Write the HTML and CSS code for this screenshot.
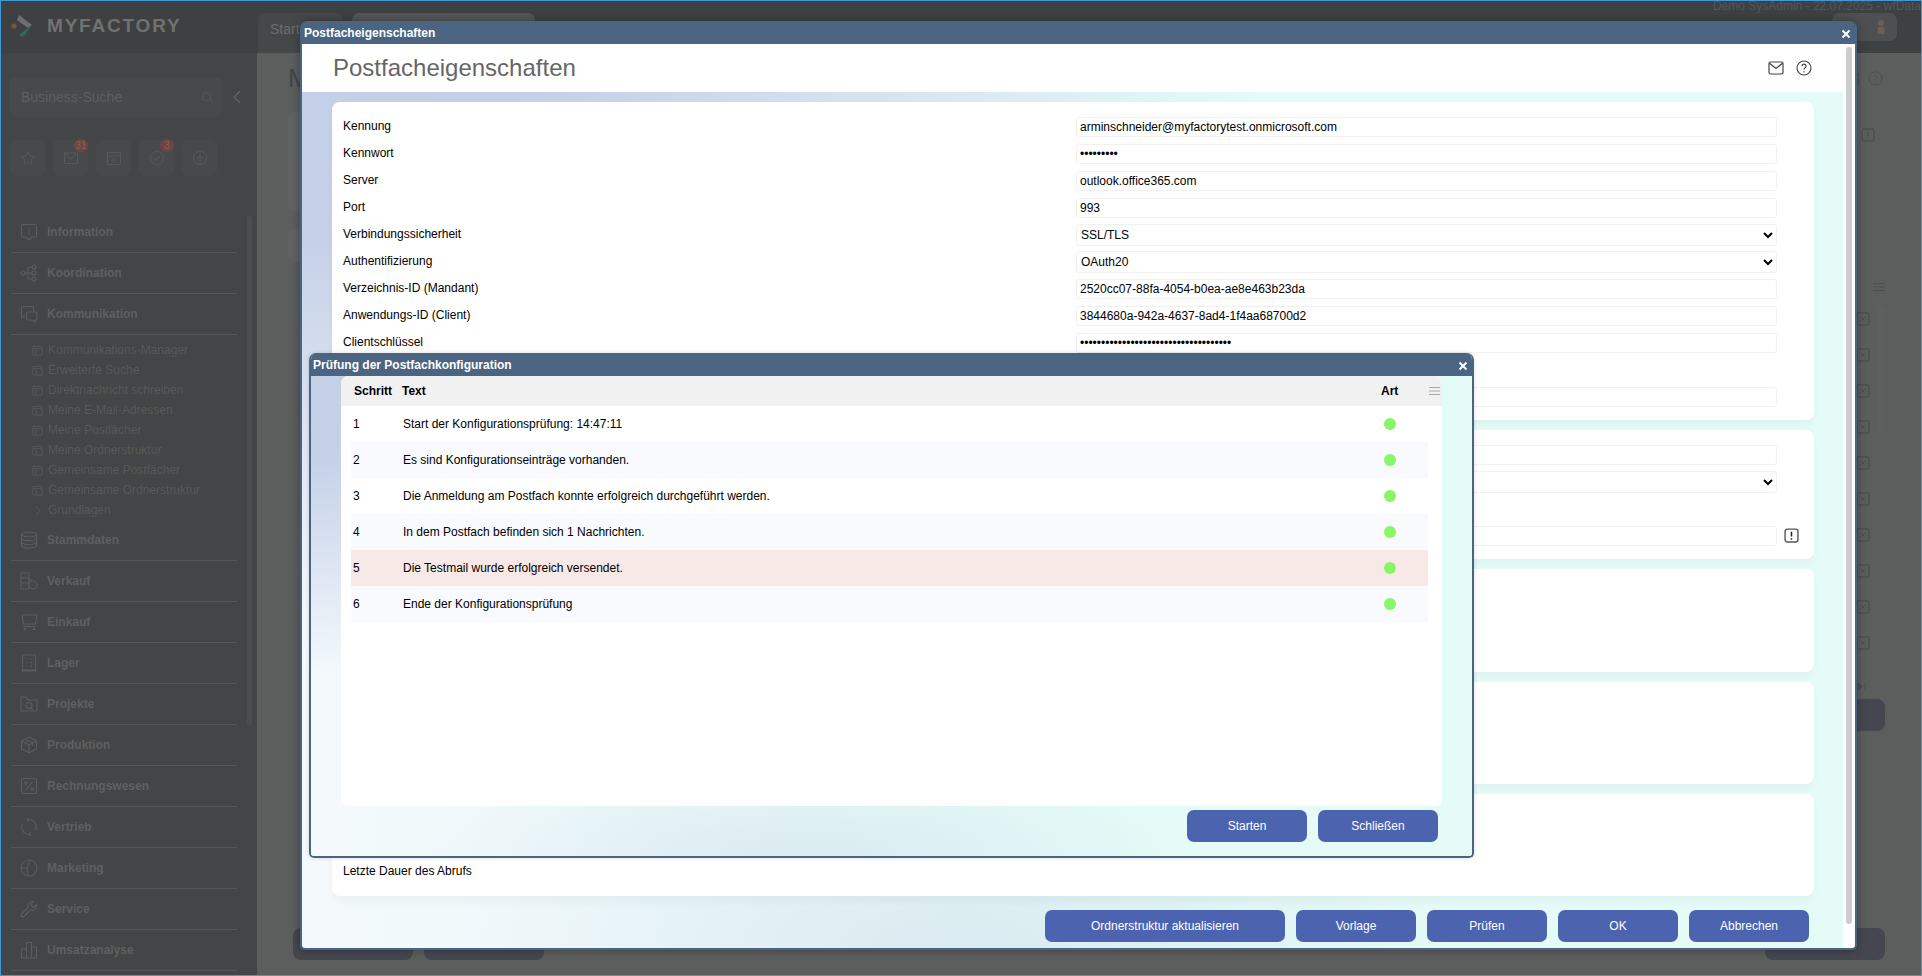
FILE: index.html
```html
<!DOCTYPE html>
<html lang="de">
<head>
<meta charset="utf-8">
<title>Postfacheigenschaften</title>
<link rel="stylesheet" href="styles.css">
</head>
<body>
<svg class="sprite" width="0" height="0" aria-hidden="true">
  <symbol id="i-sub" viewBox="0 0 12 12"><path d="M1 1.500h10v9.500H1zM1 4h10M4.500 4v7" fill="none" stroke="currentColor"/></symbol>
  <symbol id="i-xbox" viewBox="0 0 14 14"><rect x="1" y="1" width="12" height="12" rx="2" fill="none" stroke="currentColor" stroke-width="1.300"/><path d="M4.800 4.800l4.400 4.400M9.200 4.800l-4.400 4.400" stroke="currentColor"/></symbol>
</svg>
<div class="window">
  <header class="topbar">
    <div class="logo">
      <svg class="logo-mark" viewBox="0 0 24 24"><circle cx="3" cy="12" r="2.600" fill="#6b5b3a"/><path d="M8 1l13 10-4 3L6 6z" fill="#6d6e6f"/><path d="M17 14l4-3-9 12-4-2z" fill="#2f6a60"/></svg>
      <span class="logo-text">MYFACTORY</span>
    </div>
    <div class="tab">Start</div>
    <div class="tab tab-active"></div>
    <div class="top-right">
      <div class="user-line">Demo SysAdmin - 22.07.2025 - wfData</div>
      <div class="user-box"><svg viewBox="0 0 12 16" class="user-icon"><circle cx="6" cy="4" r="3" fill="#6b5f55"/><path d="M2.500 15V9.500Q2.500 8 4 8h4q1.500 0 1.500 1.500V15z" fill="#6b5f55"/></svg></div>
    </div>
  </header>
  <div class="below">
    <aside class="sidebar">
      <div class="search-row">
        <div class="search">
          <span>Business-Suche</span>
          <svg class="search-icon" viewBox="0 0 14 14"><circle cx="6" cy="6" r="4.500" fill="none" stroke="currentColor"/><path d="M9.500 9.500L13 13" stroke="currentColor"/></svg>
        </div>
        <svg class="collapse" viewBox="0 0 8 14"><path d="M7 1L1 7l6 6" fill="none" stroke="currentColor" stroke-width="1.300"/></svg>
      </div>
      <div class="quick">
        <div class="quick-btn"><svg viewBox="0 0 16 16"><path d="M8 1.500l2 4.300 4.600.6-3.400 3.200.9 4.600L8 11.900l-4.100 2.300.9-4.600L1.400 6.400 6 5.800z" fill="none" stroke="currentColor"/></svg></div>
        <div class="quick-btn"><svg viewBox="0 0 16 16"><path d="M1.500 3h13v10.500h-13zM1.500 3L8 9l6.500-6" fill="none" stroke="currentColor"/></svg><span class="badge">31</span></div>
        <div class="quick-btn"><svg viewBox="0 0 16 16"><path d="M1.500 2.500h13v12h-13zM1.500 6h13M8 8v4" fill="none" stroke="currentColor"/></svg></div>
        <div class="quick-btn"><svg viewBox="0 0 16 16"><circle cx="8" cy="8" r="6.500" fill="none" stroke="currentColor"/><path d="M5 8l2.200 2.200L11 6" fill="none" stroke="currentColor"/></svg><span class="badge">3</span></div>
        <div class="quick-btn"><svg viewBox="0 0 16 16"><circle cx="8" cy="8" r="6.500" fill="none" stroke="currentColor"/><path d="M8 5v6M5 8h6" stroke="currentColor"/></svg></div>
      </div>
      <nav class="nav">
        <div class="nav-item"><svg viewBox="0 0 18 18"><path d="M3 1.500h12q1.500 0 1.500 1.500v9.500q0 1.500-1.500 1.500h-3L9 17l-3-3H3q-1.500 0-1.500-1.500V3Q1.500 1.500 3 1.500zM9 5v.8M9 7.500v4" fill="none" stroke="currentColor" stroke-width="1.100"/></svg>Information</div>
        <div class="nav-item"><svg viewBox="0 0 18 18"><g fill="none" stroke="currentColor" stroke-width="1.100"><circle cx="3" cy="9" r="2"/><circle cx="14" cy="3" r="2"/><circle cx="14" cy="9" r="2"/><circle cx="14" cy="15" r="2"/><path d="M5 9h7M8 9V3h4M8 9v6h4"/></g></svg>Koordination</div>
        <div class="nav-item"><svg viewBox="0 0 18 18"><g fill="none" stroke="currentColor" stroke-width="1.100"><path d="M3 1.500h9q1.500 0 1.500 1.500v3M5 11H3.500L1.500 13V3q0-1.500 1.500-1.500"/><path d="M8 7h7.500q1.500 0 1.500 1.500v5q0 1.500-1.500 1.500H15v2l-2.500-2H8q-1.500 0-1.500-1.500v-5Q6.500 7 8 7z"/></g></svg>Kommunikation</div>
        <ul class="sub">
          <li><svg><use href="#i-sub"/></svg>Kommunikations-Manager</li>
          <li><svg><use href="#i-sub"/></svg>Erweiterte Suche</li>
          <li><svg><use href="#i-sub"/></svg>Direktnachricht schreiben</li>
          <li><svg><use href="#i-sub"/></svg>Meine E-Mail-Adressen</li>
          <li><svg><use href="#i-sub"/></svg>Meine Postfächer</li>
          <li><svg><use href="#i-sub"/></svg>Meine Ordnerstruktur</li>
          <li><svg><use href="#i-sub"/></svg>Gemeinsame Postfächer</li>
          <li><svg><use href="#i-sub"/></svg>Gemeinsame Ordnerstruktur</li>
          <li><svg viewBox="0 0 12 12"><path d="M4 1l5 5-5 5" fill="none" stroke="currentColor"/></svg>Grundlagen</li>
        </ul>
        <div class="nav-item"><svg viewBox="0 0 18 18"><g fill="none" stroke="currentColor" stroke-width="1.200"><ellipse cx="9" cy="3.500" rx="7.500" ry="2.500"/><path d="M1.500 3.500v11c0 1.400 3.400 2.500 7.500 2.500s7.500-1.100 7.500-2.500v-11M1.500 7.200c0 1.400 3.400 2.500 7.500 2.500s7.500-1.100 7.500-2.500M1.500 11c0 1.400 3.400 2.500 7.500 2.500s7.500-1.100 7.500-2.500"/></g></svg>Stammdaten</div>
        <div class="nav-item"><svg viewBox="0 0 18 18"><g fill="none" stroke="currentColor" stroke-width="1.100"><path d="M1 1h8v16H1zM1 6h8M1 11h8M9 8h3"/><circle cx="13" cy="13" r="4"/></g></svg>Verkauf</div>
        <div class="nav-item"><svg viewBox="0 0 18 18"><g fill="none" stroke="currentColor" stroke-width="1.100"><path d="M1 2h16l-1.500 9H3.500L2 2M3.500 13.500h12"/><circle cx="5" cy="16" r=".8"/><circle cx="14" cy="16" r=".8"/></g></svg>Einkauf</div>
        <div class="nav-item"><svg viewBox="0 0 18 18"><g fill="none" stroke="currentColor" stroke-width="1.100"><path d="M2.500 1h13v15h-13zM1 17h16M6 5h1M10 5h2M6 8.500h1M10 8.500h2M6 12h1M10 12h2"/></g></svg>Lager</div>
        <div class="nav-item"><svg viewBox="0 0 18 18"><g fill="none" stroke="currentColor" stroke-width="1.100"><path d="M1 16V2h5l2 3h9v11z"/><circle cx="9" cy="10.500" r="3"/><path d="M11 13l2 2"/></g></svg>Projekte</div>
        <div class="nav-item"><svg viewBox="0 0 18 18"><path d="M9 1l7.500 4v8L9 17l-7.500-4V5zM1.500 5L9 9l7.500-4M9 9v8M5 3l7.500 4v3" fill="none" stroke="currentColor" stroke-width="1.100"/></svg>Produktion</div>
        <div class="nav-item"><svg viewBox="0 0 18 18"><g fill="none" stroke="currentColor" stroke-width="1.100"><rect x="1.500" y="1.500" width="15" height="15" rx="2"/><path d="M12.500 5l-7 8"/><circle cx="6" cy="6" r="1.300"/><circle cx="12" cy="12" r="1.300"/></g></svg>Rechnungswesen</div>
        <div class="nav-item"><svg viewBox="0 0 18 18"><path d="M9 1.500a7.500 7.500 0 0 1 6.500 11M9 16.500a7.500 7.500 0 0 1-6.500-11M7 0l2 1.500L7 3.500M11 14.500L9 16.500l2 1.500" fill="none" stroke="currentColor" stroke-width="1.100"/></svg>Vertrieb</div>
        <div class="nav-item"><svg viewBox="0 0 18 18"><g fill="none" stroke="currentColor" stroke-width="1.100"><circle cx="9" cy="9" r="8"/><path d="M1 9h6l3-8M7 9l1 8"/></g></svg>Marketing</div>
        <div class="nav-item"><svg viewBox="0 0 18 18"><path d="M16.500 4.500l-3 3-3-3 3-3A4.500 4.500 0 0 0 8 7.500L1.500 14a1.700 1.700 0 0 0 2.500 2.500L10.500 10a4.500 4.500 0 0 0 6-5.500z" fill="none" stroke="currentColor" stroke-width="1.100"/></svg>Service</div>
        <div class="nav-item"><svg viewBox="0 0 18 18"><path d="M1.500 17V8h5v9M6.500 17V1.500h5V17M11.500 17V6h5v11M1 17h16" fill="none" stroke="currentColor" stroke-width="1.100"/></svg>Umsatzanalyse</div>
      </nav>
      <div class="side-scroll"></div>
    </aside>
    <main class="main">
      <div class="main-title">
        <h1>M</h1>
        <div class="main-title-icons">
          <svg viewBox="0 0 16 16"><path d="M1.500 3h13v10.500h-13zM1.500 3L8 9l6.500-6" fill="none" stroke="currentColor"/></svg>
          <svg viewBox="0 0 16 16"><circle cx="8" cy="8" r="7" fill="none" stroke="currentColor"/><path d="M6 6.200a2 2 0 1 1 3 1.700q-1 .6-1 1.600M8 11.500v1" fill="none" stroke="currentColor"/></svg>
        </div>
      </div>
      <section class="panel panel-filter">
        <svg class="panel-flag" viewBox="0 0 14 14"><rect x="1" y="1" width="12" height="12" rx="2" fill="none" stroke="currentColor" stroke-width="1.300"/><path d="M7 3.500v4.500M7 9.500v1.200" stroke="currentColor" stroke-width="1.300"/></svg>
      </section>
      <section class="panel panel-bar"></section>
      <section class="list">
        <div class="list-head"><svg viewBox="0 0 12 8"><path d="M0 .5h12M0 4h12M0 7.500h12" stroke="currentColor"/></svg></div>
        <div class="list-body">
          <div class="list-rows">
            <svg><use href="#i-xbox"/></svg><svg><use href="#i-xbox"/></svg><svg><use href="#i-xbox"/></svg><svg><use href="#i-xbox"/></svg><svg><use href="#i-xbox"/></svg><svg><use href="#i-xbox"/></svg><svg><use href="#i-xbox"/></svg><svg><use href="#i-xbox"/></svg><svg><use href="#i-xbox"/></svg><svg><use href="#i-xbox"/></svg>
          </div>
          <div class="list-scroll"></div>
        </div>
        <div class="pager"><svg viewBox="0 0 12 10"><path d="M1 1l6 4-6 4zM9.500 0v10" fill="currentColor" stroke="currentColor"/></svg></div>
      </section>
      <div class="main-action"><span class="ghost-btn ghost-narrow"></span></div>
      <div class="main-foot">
        <span class="ghost-btn"></span><span class="ghost-btn"></span><span class="foot-space"></span><span class="ghost-btn"></span>
      </div>
    </main>
  </div>

  <section class="dialog dialog-main">
    <div class="titlebar"><span>Postfacheigenschaften</span><svg class="close" viewBox="0 0 10 10"><path d="M1.500 1.500l7 7M8.500 1.500l-7 7" stroke="#fff" stroke-width="2"/></svg></div>
    <div class="dialog-body">
      <div class="scroller">
        <div class="page-head">
          <h2>Postfacheigenschaften</h2>
          <div class="page-icons">
            <svg viewBox="0 0 16 16"><path d="M2.500 2h11Q15 2 15 3.500v9q0 1.500-1.500 1.500h-11Q1 14 1 12.500v-9Q1 2 2.500 2zM1.800 3.500L8 8.500l6.200-5" fill="none" stroke="#444" stroke-width="1.200"/></svg>
            <svg viewBox="0 0 16 16"><circle cx="8" cy="8" r="7" fill="none" stroke="#444" stroke-width="1.100"/><path d="M6 6.200a2 2 0 1 1 3 1.700q-1 .6-1 1.600M8 11.200v1.200" fill="none" stroke="#444" stroke-width="1.200"/></svg>
          </div>
        </div>
        <div class="grad-area">
          <div class="card">
            <div class="row"><label>Kennung</label><input class="field" value="arminschneider@myfactorytest.onmicrosoft.com"></div>
            <div class="row"><label>Kennwort</label><input class="field" type="password" value="123456789"></div>
            <div class="row"><label>Server</label><input class="field" value="outlook.office365.com"></div>
            <div class="row"><label>Port</label><input class="field" value="993"></div>
            <div class="row"><label>Verbindungssicherheit</label><select class="field field-select"><option>SSL/TLS</option></select></div>
            <div class="row"><label>Authentifizierung</label><select class="field field-select"><option>OAuth20</option></select></div>
            <div class="row"><label>Verzeichnis-ID (Mandant)</label><input class="field" value="2520cc07-88fa-4054-b0ea-ae8e463b23da"></div>
            <div class="row"><label>Anwendungs-ID (Client)</label><input class="field" value="3844680a-942a-4637-8ad4-1f4aa68700d2"></div>
            <div class="row"><label>Clientschlüssel</label><input class="field" type="password" value="123456789012345678901234567890123456"></div>
            <div class="row"></div>
            <div class="row"><label></label><input class="field"></div>
          </div>
          <div class="card">
            <div class="row"><label></label><input class="field"></div>
            <div class="row"><label></label><select class="field field-select"><option></option></select></div>
            <div class="row"></div>
            <div class="row"><label></label><input class="field"><svg class="warn" viewBox="0 0 14 14"><rect x="1" y="1" width="12" height="12" rx="2" fill="none" stroke="#555" stroke-width="1.300"/><path d="M7 3.500v4.500M7 9.500v1.500" stroke="#222" stroke-width="1.400"/></svg></div>
          </div>
          <div class="card card-fixed card-3"></div>
          <div class="card card-fixed"></div>
          <div class="card card-fixed"><div class="row"><label>Letzte Dauer des Abrufs</label></div></div>
          <div class="actions">
            <button class="btn btn-wide">Ordnerstruktur aktualisieren</button>
            <button class="btn">Vorlage</button>
            <button class="btn">Prüfen</button>
            <button class="btn">OK</button>
            <button class="btn">Abbrechen</button>
          </div>
        </div>
      </div>
      <div class="track"><div class="thumb"></div></div>
    </div>
  </section>

  <section class="dialog dialog-check">
    <div class="titlebar"><span>Prüfung der Postfachkonfiguration</span><svg class="close" viewBox="0 0 10 10"><path d="M1.500 1.500l7 7M8.500 1.500l-7 7" stroke="#fff" stroke-width="2"/></svg></div>
    <div class="check-body">
      <div class="table-card">
        <div class="t-head">
          <span class="c-step">Schritt</span><span class="c-text">Text</span><span class="c-art">Art</span>
          <svg class="t-menu" viewBox="0 0 11 8"><path d="M0 .5h11M0 4h11M0 7.500h11" stroke="#a9a9a9"/></svg>
        </div>
        <div class="t-row"><span class="c-num">1</span><span class="c-msg">Start der Konfigurationsprüfung: 14:47:11</span><i class="dot"></i></div>
        <div class="t-row t-alt"><span class="c-num">2</span><span class="c-msg">Es sind Konfigurationseinträge vorhanden.</span><i class="dot"></i></div>
        <div class="t-row"><span class="c-num">3</span><span class="c-msg">Die Anmeldung am Postfach konnte erfolgreich durchgeführt werden.</span><i class="dot"></i></div>
        <div class="t-row t-alt"><span class="c-num">4</span><span class="c-msg">In dem Postfach befinden sich 1 Nachrichten.</span><i class="dot"></i></div>
        <div class="t-row t-mark"><span class="c-num">5</span><span class="c-msg">Die Testmail wurde erfolgreich versendet.</span><i class="dot"></i></div>
        <div class="t-row t-alt"><span class="c-num">6</span><span class="c-msg">Ende der Konfigurationsprüfung</span><i class="dot"></i></div>
      </div>
      <div class="check-actions">
        <button class="btn">Starten</button>
        <button class="btn">Schließen</button>
      </div>
    </div>
  </section>
</div>
</body>
</html>
```
FILE: styles.css
```css
* { box-sizing: border-box; }
html, body { margin: 0; padding: 0; height: 100%; overflow: hidden; }
body { font: 12px "Liberation Sans", Arial, sans-serif; color: #000; }
.sprite { position: absolute; }
.window {
  position: relative; width: 1922px; height: 976px; overflow: hidden;
  border: 1px solid #3f97dc; display: flex; flex-direction: column; background: #5c5d5d;
}

/* dimmed application behind the dialogs */
.topbar { height: 52px; flex: none; background: #3f4041; display: flex; align-items: flex-start; color: #6c6d6e; }
.logo { width: 257px; height: 52px; flex: none; display: flex; align-items: center; padding: 0 0 2px 10px; }
.logo-mark { width: 24px; height: 24px; margin-right: 12px; }
.logo-text { font-size: 19px; font-weight: 700; letter-spacing: 1.800px; color: #707172; }
.tab { width: 85px; height: 40px; margin-top: 12px; border-radius: 7px 7px 0 0; background: #464748; padding: 8px 12px; font-size: 14px; }
.tab-active { width: 183px; margin-left: 9px; background: #555657; }
.top-right { margin-left: auto; display: flex; flex-direction: column; align-items: flex-end; }
.user-line { font-size: 12px; line-height: 11px; color: #555657; white-space: nowrap; }
.user-box { width: 65px; height: 28px; margin: 1px 24px 0 0; border-radius: 7px; background: #4e4f50; display: flex; align-items: center; justify-content: flex-end; padding-right: 10px; }
.user-icon { width: 12px; height: 16px; }

.below { flex: 1; display: flex; min-height: 0; }
.sidebar { position: relative; width: 256px; flex: none; background: #434546; color: #5f6061; padding-top: 24px; }
.search-row { display: flex; align-items: center; padding-left: 8px; }
.search { width: 213px; height: 40px; border-radius: 7px; background: #48494a; display: flex; align-items: center; justify-content: space-between; padding: 0 8px 0 12px; font-size: 14px; color: #5e5f60; }
.search-icon { width: 13px; height: 13px; color: #565758; }
.collapse { width: 8px; height: 14px; margin-left: 11px; color: #626364; }
.quick { display: flex; gap: 8px; padding: 23px 0 0 9px; color: #575859; }
.quick-btn { position: relative; width: 35px; height: 36px; border-radius: 6px; background: #48494a; display: flex; align-items: center; justify-content: center; }
.quick-btn svg { width: 16px; height: 16px; }
.badge { position: absolute; top: -1px; right: 0; min-width: 14px; height: 13px; border-radius: 7px; background: #6d4643; color: #84605c; font-size: 10px; line-height: 13px; text-align: center; }
.nav { padding: 36px 20px 0 10px; }
.nav-item { height: 41px; border-bottom: 1px solid #565758; display: flex; align-items: center; padding-left: 9px; font-weight: 700; color: #5f6061; }
.nav-item svg { width: 18px; height: 18px; margin-right: 9px; color: #5c5d5e; flex: none; }
.sub { list-style: none; margin: 0; padding: 5px 0 0; }
.sub li { height: 20px; display: flex; align-items: center; padding-left: 21px; white-space: nowrap; color: #585959; }
.sub li svg { width: 11px; height: 11px; margin-right: 5px; flex: none; }
.side-scroll { position: absolute; left: 246px; top: 163px; width: 5px; height: 509px; border-radius: 3px; background: #4c4d4e; }

.main { flex: 1; display: flex; flex-direction: column; padding: 0 36px 15px 31px; color: #4d4e4f; min-width: 0; }
.main-title { height: 44px; flex: none; display: flex; align-items: center; justify-content: space-between; padding: 7px 0 0; }
.main-title h1 { margin: 0; font-size: 26px; font-weight: 400; color: #444546; }
.main-title-icons { display: flex; gap: 8px; padding-right: 2px; }
.main-title-icons svg { width: 15px; height: 15px; }
.panel { flex: none; border-radius: 8px; background: linear-gradient(90deg, #616262 0, #5c5d5d 30%); }
.panel-filter { height: 100px; margin-top: 15px; display: flex; justify-content: flex-end; padding: 16px 10px 0 0; }
.panel-flag { width: 14px; height: 14px; }
.panel-bar { height: 34px; margin-top: 16px; }
.list { margin-top: 10px; flex: none; }
.list-head { height: 29px; display: flex; align-items: center; justify-content: flex-end; }
.list-head svg { width: 12px; height: 8px; }
.list-body { display: flex; justify-content: flex-end; }
.list-rows { display: flex; flex-direction: column; margin-right: 9px; }
.list-rows svg { width: 14px; height: 14px; margin: 11px 0; }
.list-scroll { width: 5px; height: 128px; margin: 4px 1px 0 0; border-radius: 3px; background: #5f6060; }
.pager { height: 38px; display: flex; align-items: center; justify-content: flex-end; padding: 12px 18px 0 0; }
.pager svg { width: 10px; height: 9px; }
.main-action { display: flex; justify-content: flex-end; flex: none; }
.ghost-btn { display: block; width: 120px; height: 32px; border-radius: 8px; background: #44474f; flex: none; }
.ghost-narrow { height: 32px; }
.main-foot { margin-top: auto; display: flex; gap: 11px; padding-left: 5px; }
.foot-space { flex: 1; }

/* dialogs */
.dialog { position: absolute; border: 2px solid #4a6481; border-top: 0; border-radius: 7px 7px 5px 5px; overflow: hidden; box-shadow: 0 0 8px rgba(0, 0, 0, .35); display: flex; flex-direction: column; }
.dialog-main { left: 299px; top: 20px; width: 1557px; height: 929px; }
.dialog-check { left: 308px; top: 352px; width: 1165px; height: 505px; box-shadow: 0 0 4px rgba(0, 0, 0, .15); }
.titlebar { height: 23px; flex: none; margin: 0 -2px; background: #4a6481; color: #fff; font-weight: 700; display: flex; align-items: center; justify-content: space-between; padding: 0 6px 0 4px; }
.close { width: 10px; height: 10px; margin-top: 2px; }
.dialog-body { flex: 1; display: flex; min-height: 0; }
.scroller { flex: 1; min-width: 0; display: flex; flex-direction: column; }
.track { width: 12px; flex: none; background: #fff; padding: 3px 0 0 3px; }
.thumb { width: 6px; height: 877px; border-radius: 3px; background: #cdcdcd; }
.page-head { height: 48px; flex: none; background: #fff; display: flex; align-items: center; justify-content: space-between; padding: 0 31px 0 31px; }
.page-head h2 { margin: 0; font-size: 24px; font-weight: 400; color: #666; }
.page-icons { display: flex; gap: 12px; }
.page-icons svg { width: 16px; height: 16px; }
.grad-area, .check-body {
  background:
    radial-gradient(ellipse 34% 22% at 42% 100%, rgba(190, 204, 226, .35), rgba(190, 204, 226, 0)),
    radial-gradient(ellipse 62% 62% at 0 0, #c4cfe8 0, #c6d1e8 28%, rgba(198, 209, 232, 0) 100%),
    linear-gradient(90deg, #f4f9fc 0, #e5fbf7 55%);
}
.grad-area { flex: 1; min-height: 0; padding: 10px 29px 0 30px; display: flex; flex-direction: column; gap: 10px; }
.card { background: #fff; border-radius: 8px; padding: 11px 0 10px; flex: none; box-shadow: 0 6px 6px rgba(0, 60, 50, .035); }
.card-fixed { height: 102px; display: flex; flex-direction: column; justify-content: flex-end; padding: 0 0 11px; }
.card-3 { height: 103px; }
.row { height: 27px; display: grid; grid-template-columns: 744px 701px 30px; align-items: center; }
.row label { padding: 0 0 2px 11px; }
.field { width: 100%; height: 20px; margin: 0; border: 1px solid #f1f1f1; border-radius: 3px; padding: 0 3px; background: #fff; color: #000; font: 12px "Liberation Sans", Arial, sans-serif; outline: 0; }
.field-select { height: 22px; padding: 0; }
.warn { width: 15px; height: 15px; margin-left: 7px; }
.actions { display: flex; justify-content: flex-end; gap: 11px; padding: 4px 5px 0 0; }
.btn { width: 120px; height: 32px; flex: none; border: 0; border-radius: 7px; padding: 0; background: #4c64b0; color: #fff; font: 12px "Liberation Sans", Arial, sans-serif; }
.btn-wide { width: 240px; }

/* check dialog */
.check-body { flex: 1; min-height: 0; padding: 0 30px; display: flex; flex-direction: column; }
.table-card { height: 430px; flex: none; background: #fff; border-radius: 8px 8px 6px 6px; overflow: hidden; }
.t-head { height: 30px; background: #f1f1f1; display: flex; align-items: center; font-weight: 700; position: relative; }
.c-step { width: 61px; padding-left: 13px; }
.c-text { flex: 1; }
.c-art { width: 61px; }
.t-menu { width: 11px; height: 8px; position: absolute; right: 2px; top: 11px; }
.t-row { height: 36px; margin: 0 14px 0 10px; display: flex; align-items: center; }
.t-alt { background: #f8fafd; }
.t-mark { background: #f8e8e6; }
.c-num { width: 52px; padding-left: 2px; }
.c-msg { flex: 1; }
.dot { width: 12px; height: 12px; border-radius: 50%; background: #87f667; margin-right: 32px; }
.check-actions { display: flex; justify-content: flex-end; gap: 11px; padding: 4px 4px 0 0; }
```
